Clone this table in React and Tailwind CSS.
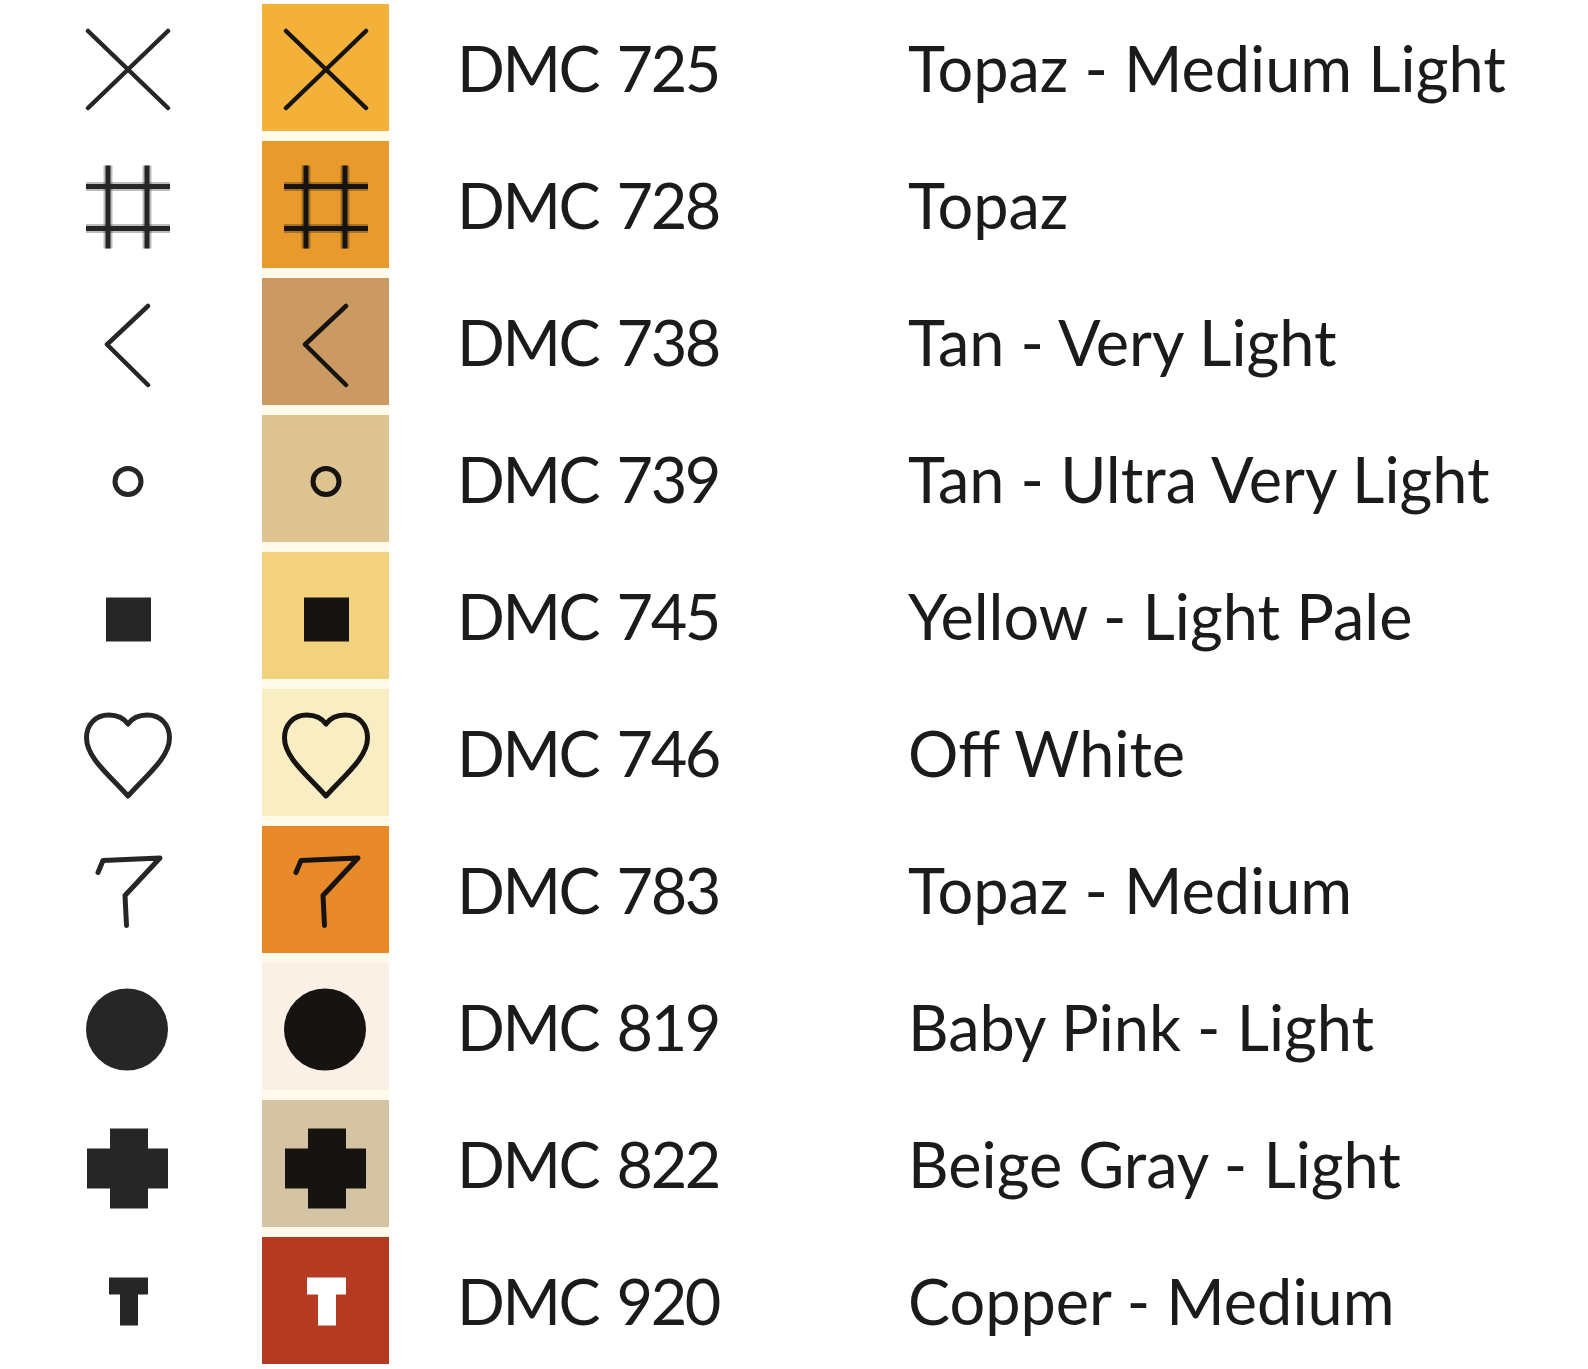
import React from 'react';

const INK = '#1c1c1c';

// each symbol is drawn in a 100x100 box centred on its cell
const Symbol = ({ kind, color = INK }) => {
  const common = { fill: 'none', stroke: color, strokeLinecap: 'round', strokeLinejoin: 'round' };
  let body = null;
  if (kind === 'x') {
    body = (
      <g {...common} strokeWidth="4.5">
        <line x1="10" y1="13" x2="90" y2="90" />
        <line x1="90" y1="13" x2="10" y2="90" />
      </g>
    );
  } else if (kind === 'hash') {
    body = (
      <g fill="none" strokeLinecap="butt">
        <g stroke={color} strokeOpacity="0.3" strokeWidth="9">
          <line x1="30" y1="10.5" x2="30" y2="93.5" />
          <line x1="69" y1="10.5" x2="69" y2="93.5" />
          <line x1="8" y1="31.5" x2="92" y2="31.5" />
          <line x1="8" y1="73.5" x2="92" y2="73.5" />
        </g>
        <g stroke={color} strokeWidth="5">
          <line x1="30" y1="10.5" x2="30" y2="93.5" />
          <line x1="69" y1="10.5" x2="69" y2="93.5" />
          <line x1="8" y1="31.5" x2="92" y2="31.5" />
          <line x1="8" y1="73.5" x2="92" y2="73.5" />
        </g>
      </g>
    );
  } else if (kind === 'lt') {
    body = <polyline {...common} strokeWidth="4.5" points="70,14 29,52.5 70,93" />;
  } else if (kind === 'ring') {
    body = <circle {...common} strokeWidth="5" cx="50" cy="52.5" r="13" />;
  } else if (kind === 'square') {
    body = <rect x="28" y="31.5" width="45" height="44" fill={color} />;
  } else if (kind === 'heart') {
    body = (
      <path
        {...common}
        strokeWidth="5"
        d="M50,21 C45,14 39,12 31,12 C17,12 8.5,22 8.5,35 C8.5,54 30,71 50,93 C70,71 91.5,54 91.5,35 C91.5,22 83,12 69,12 C61,12 55,14 50,21 Z"
      />
    );
  } else if (kind === 'seven') {
    body = <polyline {...common} strokeWidth="5" points="20,32.5 25,20.5 82,18 47,55.5 48.5,85.5" />;
  } else if (kind === 'dot') {
    body = <circle cx="49" cy="52.5" r="41" fill={color} />;
  } else if (kind === 'cross') {
    body = (
      <path
        fill={color}
        d="M32,14.5 H70 V34.5 H90 V74.5 H70 V94.5 H32 V74.5 H9 V34.5 H32 Z"
      />
    );
  } else if (kind === 'tee') {
    body = <path fill={color} d="M31,26.5 H70 V43.5 H60 V74.5 H42 V43.5 H31 Z" />;
  }
  return (
    <svg width="100" height="100" viewBox="0 0 100 100" className="blur-[0.5px]">
      {body}
    </svg>
  );
};

const threads = [
  { sym: 'x', swatch: 'bg-[#f3b13a]', code: 'DMC 725', name: 'Topaz - Medium Light' },
  { sym: 'hash', swatch: 'bg-[#e99a2c]', code: 'DMC 728', name: 'Topaz' },
  { sym: 'lt', swatch: 'bg-[#cb9a63]', code: 'DMC 738', name: 'Tan - Very Light' },
  { sym: 'ring', swatch: 'bg-[#ddc491]', code: 'DMC 739', name: 'Tan - Ultra Very Light' },
  { sym: 'square', swatch: 'bg-[#f2d27c]', code: 'DMC 745', name: 'Yellow - Light Pale' },
  { sym: 'heart', swatch: 'bg-[#f9edc3]', code: 'DMC 746', name: 'Off White' },
  { sym: 'seven', swatch: 'bg-[#e8892a]', code: 'DMC 783', name: 'Topaz - Medium' },
  { sym: 'dot', swatch: 'bg-[#faf0e6]', code: 'DMC 819', name: 'Baby Pink - Light' },
  { sym: 'cross', swatch: 'bg-[#d5c4a3]', code: 'DMC 822', name: 'Beige Gray - Light' },
  { sym: 'tee', swatch: 'bg-[#b43b22]', code: 'DMC 920', name: 'Copper - Medium', light: true },
];

const App = () => {
  return (
    <div
      className="min-h-screen bg-white pt-[4px] text-[#1b1b1b]"
      style={{ fontFamily: 'Lato, "Open Sans", sans-serif' }}
    >
      {threads.map((t, i) => (
        <div key={t.code} className="flex h-[137px]">
          {/* plain symbol */}
          <div className="w-[256px] h-[127px] flex items-center justify-center">
            <Symbol kind={t.sym} color="#262626" />
          </div>

          {/* colour swatch with symbol */}
          <div className="ml-[6px] w-[127px] flex flex-col">
            <div className={`h-[127px] flex items-center justify-center ${t.swatch}`}>
              <Symbol kind={t.sym} color={t.light ? '#ffffff' : '#161310'} />
            </div>
            {i < threads.length - 1 && <div className="h-[10px] bg-[#fffaea]" />}
          </div>

          {/* code */}
          <div className="w-[519px] pl-[68px] h-[127px] flex items-center">
            <span className="text-[63px] leading-none tracking-[-2.5px] [word-spacing:5px]">{t.code}</span>
          </div>

          {/* name */}
          <div className="h-[127px] flex items-center">
            <span className="text-[63px] leading-none whitespace-nowrap">{t.name}</span>
          </div>
        </div>
      ))}
    </div>
  );
};

export default App;
